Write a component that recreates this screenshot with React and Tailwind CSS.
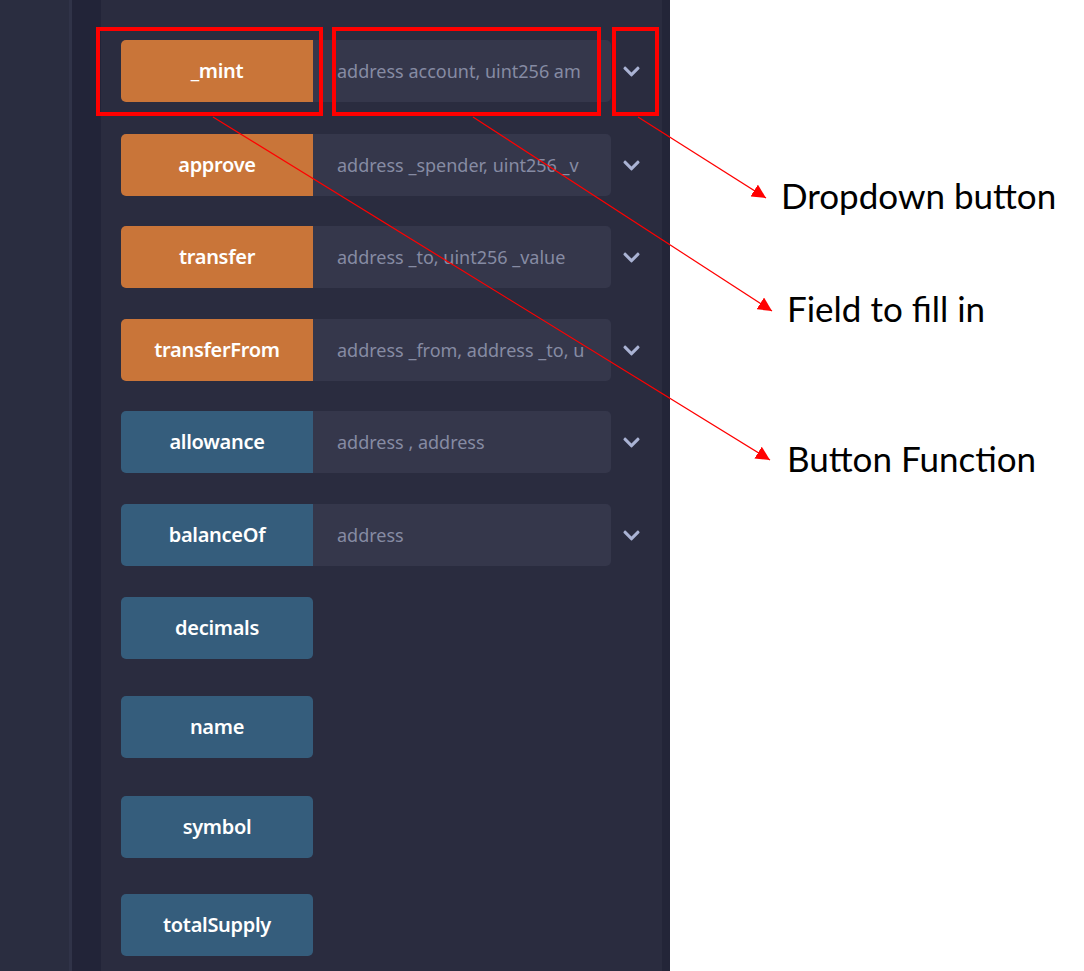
import React from "react";
import { FaChevronDown } from "react-icons/fa";

// args text is what fits in the field before it gets cut off
const rows = [
  { name: "_mint", kind: "write", args: "address account, uint256 am", mt: "mt-[40px]" },
  { name: "approve", kind: "write", args: "address _spender, uint256 _v", mt: "mt-[32px]" },
  { name: "transfer", kind: "write", args: "address _to, uint256 _value", mt: "mt-[30px]" },
  { name: "transferFrom", kind: "write", args: "address _from, address _to, u", mt: "mt-[31px]" },
  { name: "allowance", kind: "read", args: "address , address", mt: "mt-[30px]" },
  { name: "balanceOf", kind: "read", args: "address", mt: "mt-[31px]" },
  { name: "decimals", kind: "read", mt: "mt-[31px]" },
  { name: "name", kind: "read", mt: "mt-[37px]" },
  { name: "symbol", kind: "read", mt: "mt-[38px]" },
  { name: "totalSupply", kind: "read", mt: "mt-[36px]" },
];

const FunctionRow = ({ row }) => {
  const color = row.kind === "write" ? "bg-[#c97539]" : "bg-[#355d7c]";
  return (
    <div className={`flex items-center ${row.mt}`}>
      <button
        className={`${color} w-[192px] h-[62px] shrink-0 text-white text-[20px] font-semibold tracking-[-0.3px] ${
          row.args ? "rounded-l-[5px]" : "rounded-[5px]"
        }`}
      >
        {row.name}
      </button>
      {row.args && (
        <>
          <div className="w-[298px] h-[62px] bg-[#35374b] rounded-r-[5px] flex items-center pl-6">
            <span className="whitespace-nowrap text-[18px] text-[#868ba3]">
              {row.args}
            </span>
          </div>
          <button className="ml-[10px] w-[20px] flex justify-center text-[#aab3d4]">
            <FaChevronDown size={19} />
          </button>
        </>
      )}
    </div>
  );
};

const App = () => {
  return (
    <div
      className="relative flex w-[1084px] h-[971px] overflow-hidden bg-white"
      style={{ fontFamily: "'Noto Sans', sans-serif" }}
    >
      {/* left editor strip */}
      <div className="w-[72px] h-full bg-[#2a2d40] border-r-[3px] border-[#303348]" />
      <div className="w-[29px] h-full bg-[#222438]" />

      {/* deployed contract panel */}
      <div className="w-[561px] h-full bg-[#2a2c3f] pl-5">
        {rows.map((row) => (
          <FunctionRow key={row.name} row={row} />
        ))}
      </div>
      <div className="w-[8px] h-full bg-[#232538]" />

      {/* annotations */}
      <div
        className="flex-1 flex flex-col pl-[111px] text-black text-[35px] leading-none"
        style={{ fontFamily: "Lato, sans-serif" }}
      >
        <p className="mt-[178px] whitespace-nowrap">Dropdown button</p>
        <p className="mt-[78px] ml-[6px] whitespace-nowrap">Field to fill in</p>
        <p className="mt-[115px] ml-[6px] whitespace-nowrap">Button Function</p>
      </div>

      {/* callout boxes and arrows */}
      <svg
        className="absolute inset-0 pointer-events-none"
        width="1084"
        height="971"
        viewBox="0 0 1084 971"
      >
        <defs>
          <marker id="head" viewBox="0 0 10 10" refX="10" refY="5" markerWidth="14" markerHeight="14" markerUnits="userSpaceOnUse" orient="auto">
            <path d="M0 0 L10 5 L0 10 z" fill="#ff0000" />
          </marker>
        </defs>
        <rect x="98" y="29" width="223" height="85" fill="none" stroke="#ff0000" strokeWidth="4" />
        <rect x="334" y="29" width="265" height="85" fill="none" stroke="#ff0000" strokeWidth="4" />
        <rect x="614" y="29" width="43" height="85" fill="none" stroke="#ff0000" strokeWidth="4" />
        <line x1="213" y1="117" x2="770" y2="460" stroke="#ff0000" strokeWidth="1.2" markerEnd="url(#head)" />
        <line x1="473" y1="117" x2="772" y2="311" stroke="#ff0000" strokeWidth="1.2" markerEnd="url(#head)" />
        <line x1="638" y1="117" x2="766" y2="198" stroke="#ff0000" strokeWidth="1.2" markerEnd="url(#head)" />
      </svg>
    </div>
  );
};

export default App;
